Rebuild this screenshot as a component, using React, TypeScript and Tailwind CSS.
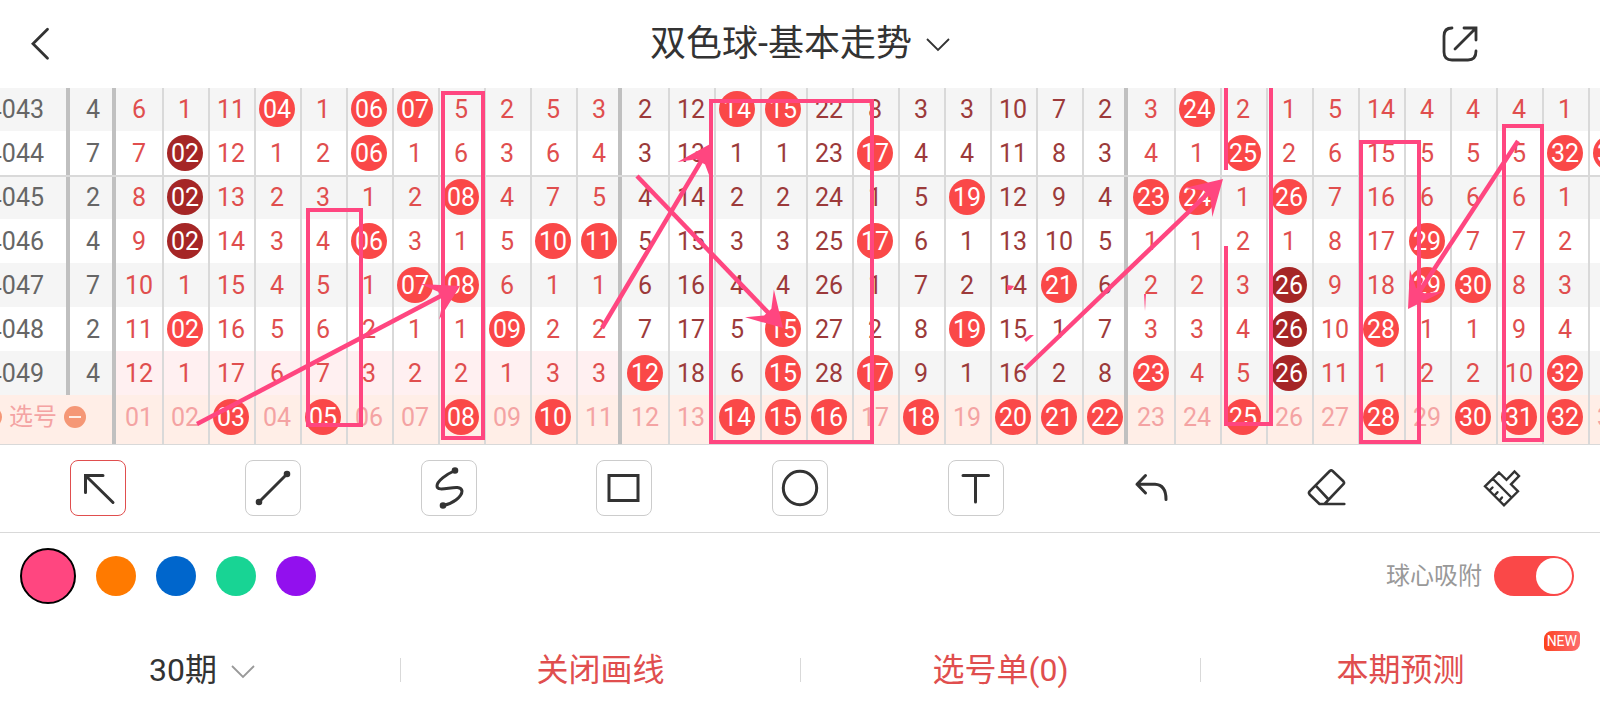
import { useState } from "react";

type Ball = "hit" | "repeat";
type Point = [number, number];

interface Row {
  issue: string;
  count: number;
  // "r" prefix marks a drawn ball, "d" a ball from a repeated streak
  cells: string;
}

const rows: Row[] = [
  {
    issue: "2024043",
    count: 4,
    cells:
      "6 1 11 r04 1 r06 r07 5 2 5 3 2 12 r14 r15 22 8 3 3 10 7 2 3 r24 2 1 5 14 4 4 4 1 5",
  },
  {
    issue: "2024044",
    count: 7,
    cells:
      "7 d02 12 1 2 r06 1 6 3 6 4 3 13 1 1 23 r17 4 4 11 8 3 4 1 r25 2 6 15 5 5 5 r32 r33",
  },
  {
    issue: "2024045",
    count: 2,
    cells:
      "8 d02 13 2 3 1 2 r08 4 7 5 4 14 2 2 24 1 5 r19 12 9 4 r23 r24 1 r26 7 16 6 6 6 1 1",
  },
  {
    issue: "2024046",
    count: 4,
    cells:
      "9 d02 14 3 4 r06 3 1 5 r10 r11 5 15 3 3 25 r17 6 1 13 10 5 1 1 2 1 8 17 r29 7 7 2 2",
  },
  {
    issue: "2024047",
    count: 7,
    cells:
      "10 1 15 4 5 1 r07 r08 6 1 1 6 16 4 4 26 1 7 2 14 r21 6 2 2 3 d26 9 18 r29 r30 8 3 3",
  },
  {
    issue: "2024048",
    count: 2,
    cells:
      "11 r02 16 5 6 2 1 1 r09 2 2 7 17 5 r15 27 2 8 r19 15 1 7 3 3 4 d26 10 r28 1 1 9 4 4",
  },
  {
    issue: "2024049",
    count: 4,
    cells:
      "12 1 17 6 7 3 2 2 1 3 3 r12 18 6 r15 28 r17 9 1 16 2 8 r23 4 5 d26 11 1 2 2 10 r32 5",
  },
];

const initialPicks = [3, 5, 8, 10, 14, 15, 16, 18, 20, 21, 22, 25, 28, 30, 31, 32];

const colors = [
  { name: "粉色", className: "bg-[#ff4680]" },
  { name: "橙色", className: "bg-[#ff7a00]" },
  { name: "蓝色", className: "bg-[#0066cc]" },
  { name: "绿色", className: "bg-[#18d494]" },
  { name: "紫色", className: "bg-[#9210ee]" },
];

// Grid lines are inset shadows so they don't shift the numbers
const lines = {
  first: "",
  middle: "shadow-[inset_2px_0_#d9d9d9]",
  last: "shadow-[inset_2px_0_#d9d9d9,inset_-4px_0_#c0c0c0]",
  thick: "shadow-[inset_-4px_0_#c0c0c0]",
};

const linesWithTop = {
  first: "shadow-[inset_0_2px_#d9d9d9]",
  middle: "shadow-[inset_0_2px_#d9d9d9,inset_2px_0_#d9d9d9]",
  last: "shadow-[inset_0_2px_#d9d9d9,inset_2px_0_#d9d9d9,inset_-4px_0_#c0c0c0]",
  thick: "shadow-[inset_0_2px_#d9d9d9,inset_-4px_0_#c0c0c0]",
};

function lineKind(col: number): "first" | "middle" | "last" {
  if (col % 11 === 0) return "first";
  return col === 10 || col === 21 ? "last" : "middle";
}

function BallMark({ value, kind }: { value: string; kind: Ball }) {
  return (
    <span
      className={`mx-auto flex size-9 items-center justify-center rounded-full pt-0.5 text-white ${
        kind === "hit" ? "bg-[#fa4848]" : "bg-[#a52626]"
      }`}
    >
      {value}
    </span>
  );
}

function TrendRow({ row, index }: { row: Row; index: number }) {
  const l = index === 2 ? linesWithTop : lines;
  const isLatest = index === rows.length - 1;
  return (
    <tr className={`h-11 ${index % 2 === 0 ? "bg-[#f5f5f5]" : "bg-white"}`}>
      <th scope="row" className={`pt-0.5 pr-[26px] text-right font-normal text-[#666] ${l.thick}`}>
        {row.issue}
      </th>
      <td className={`pt-0.5 text-[#666] ${l.thick}`}>{row.count}</td>
      {row.cells.split(" ").map((cell, i) => {
        const isBall = cell[0] === "r" || cell[0] === "d";
        const color = i >= 11 && i < 22 ? "text-[#9c3a3a]" : "text-[#e04e4e]";
        const bg = isLatest && i < 11 ? "bg-[#fff0f1]" : "";
        return (
          <td key={i} className={`${isBall ? "" : "pt-0.5"} ${color} ${bg} ${l[lineKind(i)]}`}>
            {isBall ? (
              <BallMark value={cell.slice(1)} kind={cell[0] === "r" ? "hit" : "repeat"} />
            ) : (
              cell
            )}
          </td>
        );
      })}
    </tr>
  );
}

function Arrow({ from, to }: { from: Point; to: Point }) {
  const len = Math.hypot(to[0] - from[0], to[1] - from[1]);
  const ux = (to[0] - from[0]) / len;
  const uy = (to[1] - from[1]) / len;
  const at = (back: number, side: number) =>
    `${to[0] - ux * back - uy * side},${to[1] - uy * back + ux * side}`;
  return (
    <g>
      <line
        x1={from[0]}
        y1={from[1]}
        x2={to[0] - ux * 18}
        y2={to[1] - uy * 18}
        stroke="#ff4680"
        strokeWidth="4.5"
      />
      <polygon
        points={[at(0, 0), at(34, 20), at(22, 5), at(22, -5), at(34, -20)].join(" ")}
        fill="#ff4680"
      />
    </g>
  );
}

function Drawings() {
  return (
    <svg
      className="pointer-events-none absolute top-0 left-0 h-full w-[1634px]"
      aria-hidden="true"
    >
      <g transform="translate(0 -88)">
        <g fill="none" stroke="#ff4680" strokeWidth="4">
          <rect x="308" y="210" width="53" height="215" />
          <rect x="443" y="93" width="40" height="345" />
          <rect x="711" y="101" width="161" height="341" />
          <path d="M1226 80V170M1226 246V424H1271V80" />
          <rect x="1361" y="142" width="58" height="300" />
          <rect x="1504" y="126" width="38" height="314" />
        </g>
        <Arrow from={[197, 424]} to={[460, 286]} />
        <Arrow from={[602, 328]} to={[712, 143]} />
        <Arrow from={[637, 176]} to={[783, 328]} />
        <Arrow from={[1025, 369]} to={[1223, 179]} />
        <Arrow from={[1518, 141]} to={[1408, 309]} />
        {/* leftovers of erased strokes */}
        <g fill="#ff4680">
          <path d="M1007 285L1014 286L1011 290L1007 290Z" />
          <path d="M1024 339L1030 335L1034 335L1026 342Z" />
          <path d="M1144 294L1146 294L1145 311Z" />
        </g>
      </g>
    </svg>
  );
}

function Chevron({ className }: { className: string }) {
  return (
    <svg className={`h-3.5 w-6 ${className}`} viewBox="0 0 24 14" fill="none" aria-hidden="true">
      <path d="M1 1L12 12L23 1" stroke="currentColor" strokeWidth="1.8" />
    </svg>
  );
}

function ToolIcon({ name }: { name: string }) {
  const box = {
    className: "size-14 shrink-0",
    viewBox: "0 0 56 56",
    fill: "none",
    stroke: "#333",
    strokeWidth: 3,
    strokeLinecap: "round" as const,
    strokeLinejoin: "round" as const,
    "aria-hidden": true,
  };
  switch (name) {
    case "arrow":
      return (
        <svg {...box}>
          <path d="M43 42.5L15.5 15.5M15.5 32.5V15.5H33" strokeLinejoin="miter" />
        </svg>
      );
    case "line":
      return (
        <svg {...box}>
          <path d="M14 42L42 14" />
          <circle cx="14" cy="42" r="1.8" fill="#333" />
          <circle cx="42" cy="14" r="1.8" fill="#333" />
        </svg>
      );
    case "curve":
      return (
        <svg {...box}>
          <path d="M34 10.5C26 14 16 21 16 26C16 34 40 22 41 31C41 37 31 44 22 45.5" />
          <circle cx="34" cy="10.5" r="1.8" fill="#333" />
          <circle cx="22" cy="45.5" r="1.8" fill="#333" />
        </svg>
      );
    case "rect":
      return (
        <svg {...box}>
          <rect x="13" y="15.5" width="29" height="25" strokeLinejoin="miter" />
        </svg>
      );
    case "circle":
      return (
        <svg {...box}>
          <circle cx="28" cy="28" r="16.7" />
        </svg>
      );
    case "text":
      return (
        <svg {...box}>
          <path d="M15 15.5H40.5M27.5 15.5V42" />
        </svg>
      );
    case "undo":
      return (
        <svg {...box}>
          <path d="M22.5 15.5L14 24.3L22.5 33M14 24.3H32Q43 24.8 43 39.5" />
        </svg>
      );
    case "eraser":
      return (
        <svg {...box} strokeWidth={2.6}>
          <path d="M30.8 11Q32.2 9.8 33.600 11L44.4 21.3Q45.7 22.7 44.4 24.1L25.500 44H20.500L10.6 34.5Q9.3 33 10.6 31.4ZM16.9 25.800L28.700 38.500M22.500 44H45.3" />
        </svg>
      );
    default:
      return (
        <svg {...box} strokeWidth={2.4} strokeLinejoin="miter">
          <path d="M25 12.5L32.5 19.8L40.5 11.5L45 16L37 24.300L44 31.3L30 45.300L11 26.300ZM19 19L37 37M15.5 30.500L18.500 27.500M20.5 35.500L23.500 32.200M25.500 40.500L28 37.500" />
        </svg>
      );
  }
}

const tools = [
  { name: "arrow", label: "箭头" },
  { name: "line", label: "直线" },
  { name: "curve", label: "曲线" },
  { name: "rect", label: "矩形" },
  { name: "circle", label: "圆形" },
  { name: "text", label: "文字" },
];

const actions = [
  { name: "undo", label: "撤销" },
  { name: "eraser", label: "橡皮擦" },
  { name: "clear", label: "清空" },
];

export default function App() {
  const [picks, setPicks] = useState<number[]>(initialPicks);
  const [tool, setTool] = useState("arrow");
  const [color, setColor] = useState(0);
  const [snap, setSnap] = useState(true);

  const togglePick = (n: number) =>
    setPicks((prev) => (prev.includes(n) ? prev.filter((p) => p !== n) : [...prev, n]));

  return (
    <div className="min-h-screen overflow-hidden bg-white font-[Roboto,'Noto_Sans_CJK_SC',sans-serif] text-[#333]">
      <header className="grid h-[88px] grid-cols-[1fr_auto_1fr] items-center">
        <button type="button" aria-label="返回" className="ml-5 size-10">
          <svg className="size-10" viewBox="0 0 40 40" fill="none" aria-hidden="true">
            <path
              d="M27.5 5.300L13 19.800L27.5 34.300"
              stroke="#333"
              strokeWidth="2.8"
              strokeLinecap="round"
            />
          </svg>
        </button>
        <h1 className="text-4xl font-normal">
          <button type="button" className="flex items-center gap-3.5">
            双色球-基本走势
            <Chevron className="mt-0.5 text-[#333]" />
          </button>
        </h1>
        <button type="button" aria-label="分享" className="mr-[120px] size-10 justify-self-end">
          <svg
            className="size-10"
            viewBox="0 0 40 40"
            fill="none"
            stroke="#333"
            strokeWidth="2.8"
            strokeLinecap="round"
            aria-hidden="true"
          >
            <path d="M12 4Q4 4 4 12V28Q4 36 12 36H28Q36 36 36 27M24 4H36V16M36 4L15 25" />
          </svg>
        </button>
      </header>

      <main>
        <div className="relative overflow-hidden border-b border-[#d9d9d9]">
          <table className="-mt-px -ml-[76px] w-[1710px] table-fixed border-collapse text-center text-[25px] leading-9">
            <colgroup>
              <col className="w-[146px]" />
              <col className="w-[46px]" span={34} />
            </colgroup>
            <tbody>
              {rows.map((row, i) => (
                <TrendRow key={row.issue} row={row} index={i} />
              ))}
              <tr className="h-[49px] bg-[#ffeee7] align-top text-[#f4a3a3]">
                <th
                  scope="row"
                  colSpan={2}
                  className={`pt-1 pr-[30px] text-2xl leading-9 font-normal ${lines.thick}`}
                >
                  <div className="flex items-center justify-end gap-[7px]">
                    <button
                      type="button"
                      aria-label="增加"
                      className="size-[22px] rounded-full bg-[#f59776]"
                    />
                    选号
                    <button
                      type="button"
                      aria-label="减少"
                      className="flex size-[22px] items-center justify-center rounded-full bg-[#f59776]"
                    >
                      <span className="h-0.5 w-3 bg-[#ffeee7]" />
                    </button>
                  </div>
                </th>
                {Array.from({ length: 33 }, (_, i) => {
                  const label = String(i + 1).padStart(2, "0");
                  return (
                    <td key={label} className={`pt-1 ${lines[lineKind(i)]}`}>
                      <button type="button" className="block w-full" onClick={() => togglePick(i + 1)}>
                        {picks.includes(i + 1) ? (
                          <BallMark value={label} kind="hit" />
                        ) : (
                          <span className="block pt-px">{label}</span>
                        )}
                      </button>
                    </td>
                  );
                })}
              </tr>
            </tbody>
          </table>
          <Drawings />
        </div>

        <div className="grid h-[88px] grid-cols-9 place-items-center border-b border-[#d9d9d9] px-2.5 pb-px">
          {tools.map((t) => (
            <button
              key={t.name}
              type="button"
              aria-label={t.label}
              aria-pressed={tool === t.name}
              onClick={() => setTool(t.name)}
              className={`flex size-14 items-center justify-center rounded-lg border ${
                tool === t.name ? "border-[#e04e4e]" : "border-[#ccc]"
              }`}
            >
              <ToolIcon name={t.name} />
            </button>
          ))}
          {actions.map((a) => (
            <button key={a.name} type="button" aria-label={a.label} className="size-14">
              <ToolIcon name={a.name} />
            </button>
          ))}
        </div>

        <div className="flex h-[86px] items-center justify-between pr-[26px] pl-5">
          <div className="flex items-center gap-5">
            {colors.map((c, i) => (
              <button
                key={c.name}
                type="button"
                aria-label={c.name}
                onClick={() => setColor(i)}
                className={`rounded-full ${c.className} ${
                  color === i ? "size-14 border-2 border-black" : "size-10"
                }`}
              />
            ))}
          </div>
          <label className="flex items-center gap-3 text-2xl text-[#999]">
            球心吸附
            <input
              type="checkbox"
              role="switch"
              checked={snap}
              onChange={(e) => setSnap(e.target.checked)}
              className="h-10 w-20 appearance-none rounded-full bg-[#ccc] p-0.5 before:block before:size-9 before:rounded-full before:bg-white checked:bg-[#fa4848] checked:before:ml-auto"
            />
          </label>
        </div>
      </main>

      <footer className="grid h-[101px] grid-cols-4 text-[32px] text-[#e04e4e]">
        <button type="button" className="flex items-center justify-center gap-3.5 pl-1 text-[#333]">
          30期
          <Chevron className="mt-1 text-[#999]" />
        </button>
        <button type="button" className="flex items-center">
          <span className="h-6 w-px bg-[#d9d9d9]" />
          <span className="flex-1">关闭画线</span>
        </button>
        <button type="button" className="flex items-center">
          <span className="h-6 w-px bg-[#d9d9d9]" />
          <span className="flex-1">选号单(0)</span>
        </button>
        <button type="button" className="relative flex items-center">
          <span className="h-6 w-px bg-[#d9d9d9]" />
          <span className="flex-1">本期预测</span>
          <span className="absolute top-3 right-5 rounded-tl-lg rounded-tr-sm rounded-br-lg rounded-bl-sm bg-linear-to-r from-[#fc4216] to-[#fd6c6c] px-[3px] text-sm leading-5 text-white">
            NEW
          </span>
        </button>
      </footer>
    </div>
  );
}
